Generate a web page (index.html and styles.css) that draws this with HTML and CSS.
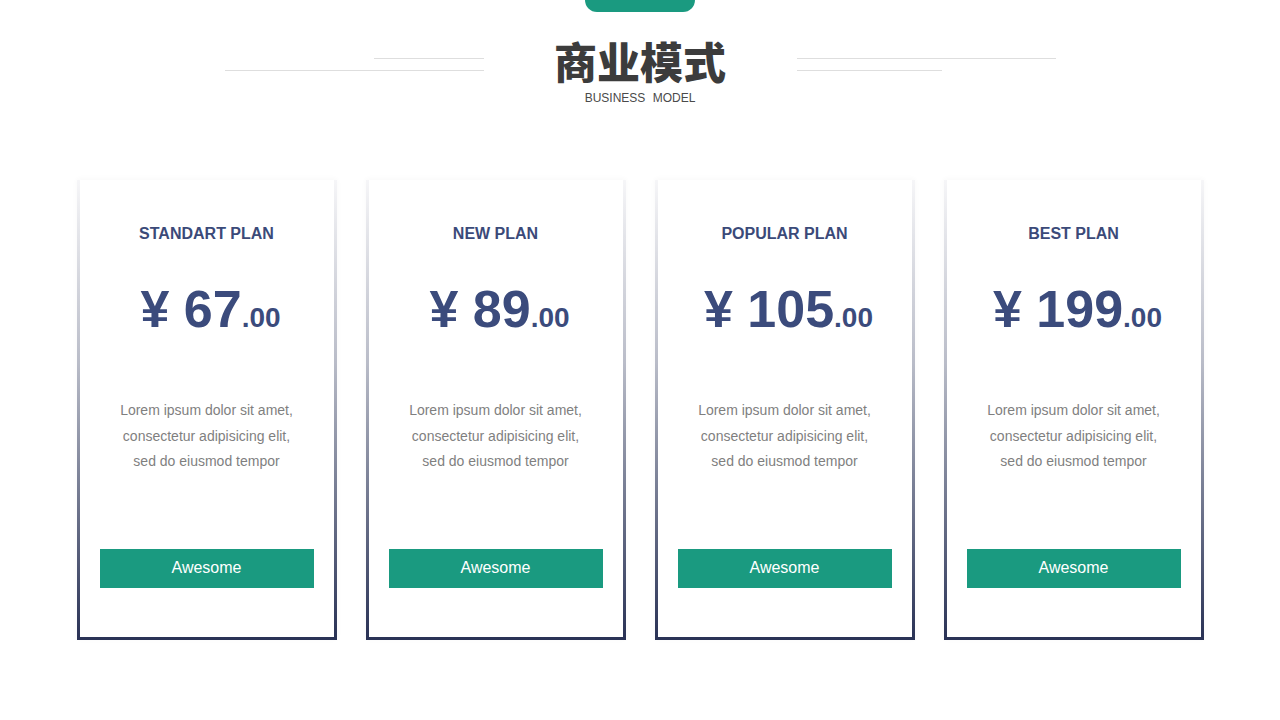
FILE: index.html
```html
<!DOCTYPE html>
<html lang="zh-CN">
<head>
    <meta charset="UTF-8">
    <meta name="viewport" content="width=device-width, initial-scale=1.0">
    <title>商业模式</title>
    <link rel="stylesheet" href="styles.css">
</head>
<body>
    <div class="slide">
        <div class="tab"></div>

        <div class="header">
            <div class="side side-left">
                <span class="line line-short"></span>
                <span class="line"></span>
            </div>
            <div class="title-block">
                <h1>商业模式</h1>
                <div class="subtitle">BUSINESS MODEL</div>
            </div>
            <div class="side side-right">
                <span class="line"></span>
                <span class="line line-short"></span>
            </div>
        </div>

        <div class="plans">
            <div class="plan">
                <div class="plan-name">STANDART PLAN</div>
                <div class="price">¥ 67<span class="cents">.00</span></div>
                <p class="desc">Lorem ipsum dolor sit amet,<br>consectetur adipisicing elit,<br>sed do eiusmod tempor</p>
                <button class="btn">Awesome</button>
            </div>
            <div class="plan">
                <div class="plan-name">NEW PLAN</div>
                <div class="price">¥ 89<span class="cents">.00</span></div>
                <p class="desc">Lorem ipsum dolor sit amet,<br>consectetur adipisicing elit,<br>sed do eiusmod tempor</p>
                <button class="btn">Awesome</button>
            </div>
            <div class="plan">
                <div class="plan-name">POPULAR PLAN</div>
                <div class="price">¥ 105<span class="cents">.00</span></div>
                <p class="desc">Lorem ipsum dolor sit amet,<br>consectetur adipisicing elit,<br>sed do eiusmod tempor</p>
                <button class="btn">Awesome</button>
            </div>
            <div class="plan">
                <div class="plan-name">BEST PLAN</div>
                <div class="price">¥ 199<span class="cents">.00</span></div>
                <p class="desc">Lorem ipsum dolor sit amet,<br>consectetur adipisicing elit,<br>sed do eiusmod tempor</p>
                <button class="btn">Awesome</button>
            </div>
        </div>
    </div>
</body>
</html>
```

FILE: styles.css
```css
body {
    margin: 0;
    background: #fff;
    font-family: "Liberation Sans", Arial, sans-serif;
}
.slide {
    width: 1280px;
    height: 720px;
    overflow: hidden;
}
.tab {
    width: 110px;
    height: 12px;
    margin: 0 auto;
    background-color: #1a9a80;
    border-radius: 0 0 12px 12px;
}
.header {
    display: flex;
    justify-content: center;
}
.side {
    width: 259px;
    display: flex;
    flex-direction: column;
    gap: 11px;
    padding-top: 46px;
}
.line {
    display: block;
    height: 1px;
    background-color: #dedede;
}
.side-left .line-short {
    width: 110px;
    align-self: flex-end;
}
.side-right .line-short {
    width: 145px;
}
.title-block {
    width: 313px;
    text-align: center;
}
h1 {
    margin: 0;
    padding-top: 23px;
    font-family: "Noto Sans CJK SC", sans-serif;
    font-size: 43px;
    font-weight: 900;
    line-height: 50px;
    color: #3c3c3c;
}
.subtitle {
    margin-top: 6px;
    font-size: 12px;
    line-height: 14px;
    color: #4a4a4a;
    word-spacing: 4px;
}
.plans {
    display: flex;
    justify-content: center;
    gap: 29px;
    margin-top: 75px;
}
.plan {
    width: 260px;
    height: 460px;
    box-sizing: border-box;
    padding-top: 44px;
    text-align: center;
    border: 3px solid #2a3356;
    border-top: 0;
    border-image: linear-gradient(to bottom, #f6f6f8 0%, #b9bcc8 40%, #2a3356 100%) 1;
    box-shadow: 0 -1px 6px rgba(0, 0, 0, 0.03);
}
.plan-name {
    font-size: 16px;
    line-height: 20px;
    font-weight: bold;
    color: #3b4a79;
}
.price {
    margin-top: 35px;
    padding-left: 8px;
    font-size: 52px;
    line-height: 60px;
    font-weight: bold;
    color: #3b4b7c;
}
.cents {
    font-size: 28px;
    line-height: 1;
}
.desc {
    margin: 59px 0 0;
    font-size: 14px;
    line-height: 25.5px;
    color: #7f7f7f;
}
.btn {
    display: block;
    width: 214px;
    height: 39px;
    margin: 74px auto 0;
    border: none;
    background-color: #1a9a80;
    color: #fff;
    font-family: "Liberation Sans", Arial, sans-serif;
    font-size: 16px;
    cursor: pointer;
}
```
